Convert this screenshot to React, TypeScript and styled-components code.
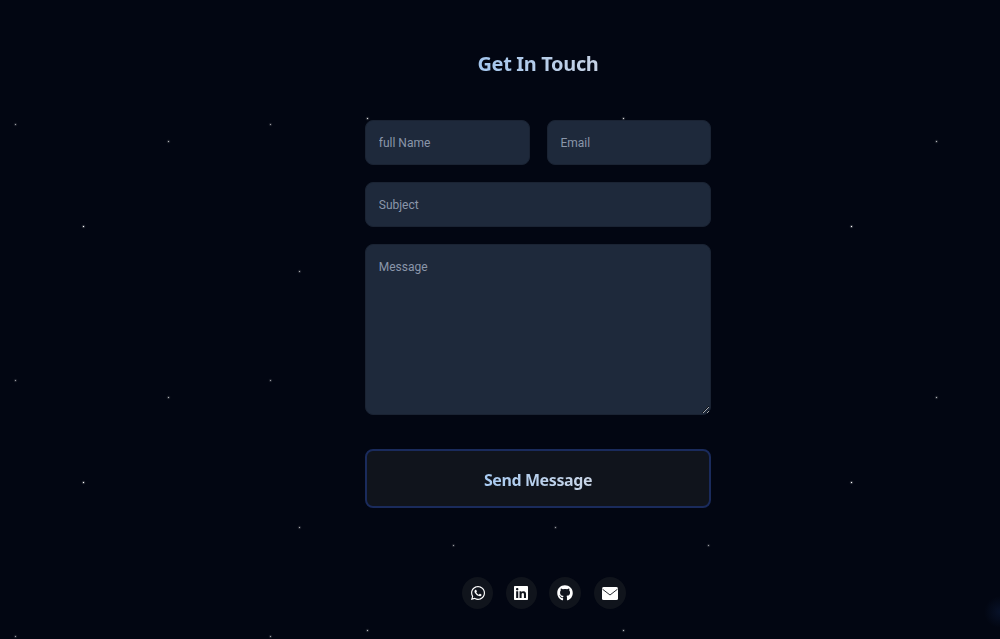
import React from "react";
import styled, { createGlobalStyle } from "styled-components";
import { FaWhatsapp, FaLinkedin, FaGithub } from "react-icons/fa";

const FONT = `"Noto Sans", "Open Sans", "Liberation Sans", sans-serif`;
const FIELD_FONT = `Roboto, "Noto Sans", "Liberation Sans", sans-serif`;
const BG = "#020612";

const Global = createGlobalStyle`
  * { box-sizing: border-box; }
  html, body { margin: 0; padding: 0; background: ${BG}; }
  body { font-family: ${FONT}; overflow: hidden; }
`;

const Page = styled.main`
  position: relative;
  height: 639px;
  overflow: hidden;
  background: ${BG};
  padding-top: 50px;
  padding-left: 76px;
  display: flex;
  flex-direction: column;
  align-items: center;
`;

const Sky = styled.div`
  position: absolute;
  inset: 0;
`;

const Star = styled.span<{ $x: number; $y: number; $a: number }>`
  position: absolute;
  left: ${(p) => p.$x}px;
  top: ${(p) => p.$y}px;
  width: 1px;
  height: 1px;
  background: #fff;
  opacity: ${(p) => p.$a};
  box-shadow: 0 0 1px 0.5px rgba(255, 255, 255, 0.45);
`;

const Glow = styled.div`
  position: absolute;
  right: -16px;
  top: 596px;
  width: 32px;
  height: 32px;
  border-radius: 50%;
  background: radial-gradient(circle, rgba(30, 64, 130, 0.2), rgba(30, 64, 130, 0) 70%);
`;

const Heading = styled.h1`
  position: relative;
  margin: 0 0 42px;
  font-size: 20px;
  line-height: 28px;
  font-weight: 700;
  letter-spacing: -0.35px;
  background: linear-gradient(90deg, #a3c6ee, #c6d2e4);
  -webkit-background-clip: text;
  background-clip: text;
  color: transparent;
`;

const Form = styled.form`
  position: relative;
  width: 346.5px;
  display: flex;
  flex-direction: column;
  gap: 17px;
`;

const Row = styled.div`
  display: grid;
  grid-template-columns: 1fr 1fr;
  gap: 17px;
`;

const fieldCss = `
  display: block;
  width: 100%;
  background: #1e293b;
  border: 1px solid #1a2333;
  border-radius: 8px;
  padding: 1px 13px 0;
  color: #e2e8f0;
  font-family: ${FIELD_FONT};
  font-size: 12px;
  outline: none;
  &::placeholder { color: #8a96aa; opacity: 1; }
`;

const Input = styled.input`
  ${fieldCss}
  height: 45px;
`;

const TextArea = styled.textarea`
  ${fieldCss}
  height: 171px;
  padding-top: 14px;
  line-height: 16px;
  resize: vertical;
`;

const SendButton = styled.button`
  margin-top: 17px;
  height: 59px;
  width: 100%;
  padding: 2px 0 0;
  background: #10141c;
  border: 2px solid #1a2b5c;
  border-radius: 8px;
  font-family: ${FONT};
  cursor: pointer;
`;

const SendLabel = styled.span`
  font-size: 16px;
  font-weight: 700;
  letter-spacing: -0.4px;
  background: linear-gradient(90deg, #a8cbf2, #c9d5e6);
  -webkit-background-clip: text;
  background-clip: text;
  color: transparent;
`;

const Socials = styled.nav`
  position: relative;
  margin-top: 69px;
  margin-left: 12px;
  display: flex;
  gap: 12.5px;
`;

const SocialLink = styled.a<{ $w: number }>`
  width: ${(p) => p.$w}px;
  height: 32px;
  border-radius: 50%;
  background: #10141c;
  color: #fff;
  display: flex;
  align-items: center;
  justify-content: center;
  font-size: 16px;
`;

const MailIcon = () => (
  <svg width="16" height="13" viewBox="0 0 16 13" aria-hidden="true">
    <rect width="16" height="13" rx="1.5" fill="#fff" />
    <path d="M0.5 2.2 L8 8 L15.5 2.2" fill="none" stroke="#10141c" strokeWidth="0.9" />
  </svg>
);

const stars: [number, number, number][] = [
  [15, 124, 0.6], [270, 124, 0.6], [168, 141, 0.7], [83, 226, 1], [299, 271, 0.65],
  [15, 380, 0.6], [270, 380, 0.6], [168, 397, 0.7], [83, 482, 1], [299, 527, 0.65],
  [15, 636, 0.6], [270, 636, 0.6], [936, 141, 0.7], [851, 226, 1], [936, 397, 0.7],
  [851, 482, 1], [367, 118, 0.85], [623, 118, 0.85], [453, 545, 0.6], [708, 545, 0.6],
  [555, 527, 0.6], [367, 630, 0.7], [623, 630, 0.7],
];

export default function App() {
  return (
    <>
      <Global />
      <Page>
        <Sky>
          {stars.map(([x, y, a]) => (
            <Star key={`${x}-${y}`} $x={x} $y={y} $a={a} />
          ))}
          <Glow />
        </Sky>
        <Heading>Get In Touch</Heading>
        <Form onSubmit={(e) => e.preventDefault()}>
          <Row>
            <Input placeholder="full Name" />
            <Input placeholder="Email" />
          </Row>
          <Input placeholder="Subject" />
          <TextArea placeholder="Message" />
          <SendButton type="submit">
            <SendLabel>Send Message</SendLabel>
          </SendButton>
        </Form>
        <Socials>
          <SocialLink $w={31} href="#"><FaWhatsapp /></SocialLink>
          <SocialLink $w={31} href="#"><FaLinkedin /></SocialLink>
          <SocialLink $w={32} href="#"><FaGithub /></SocialLink>
          <SocialLink $w={32} href="#"><MailIcon /></SocialLink>
        </Socials>
      </Page>
    </>
  );
}
